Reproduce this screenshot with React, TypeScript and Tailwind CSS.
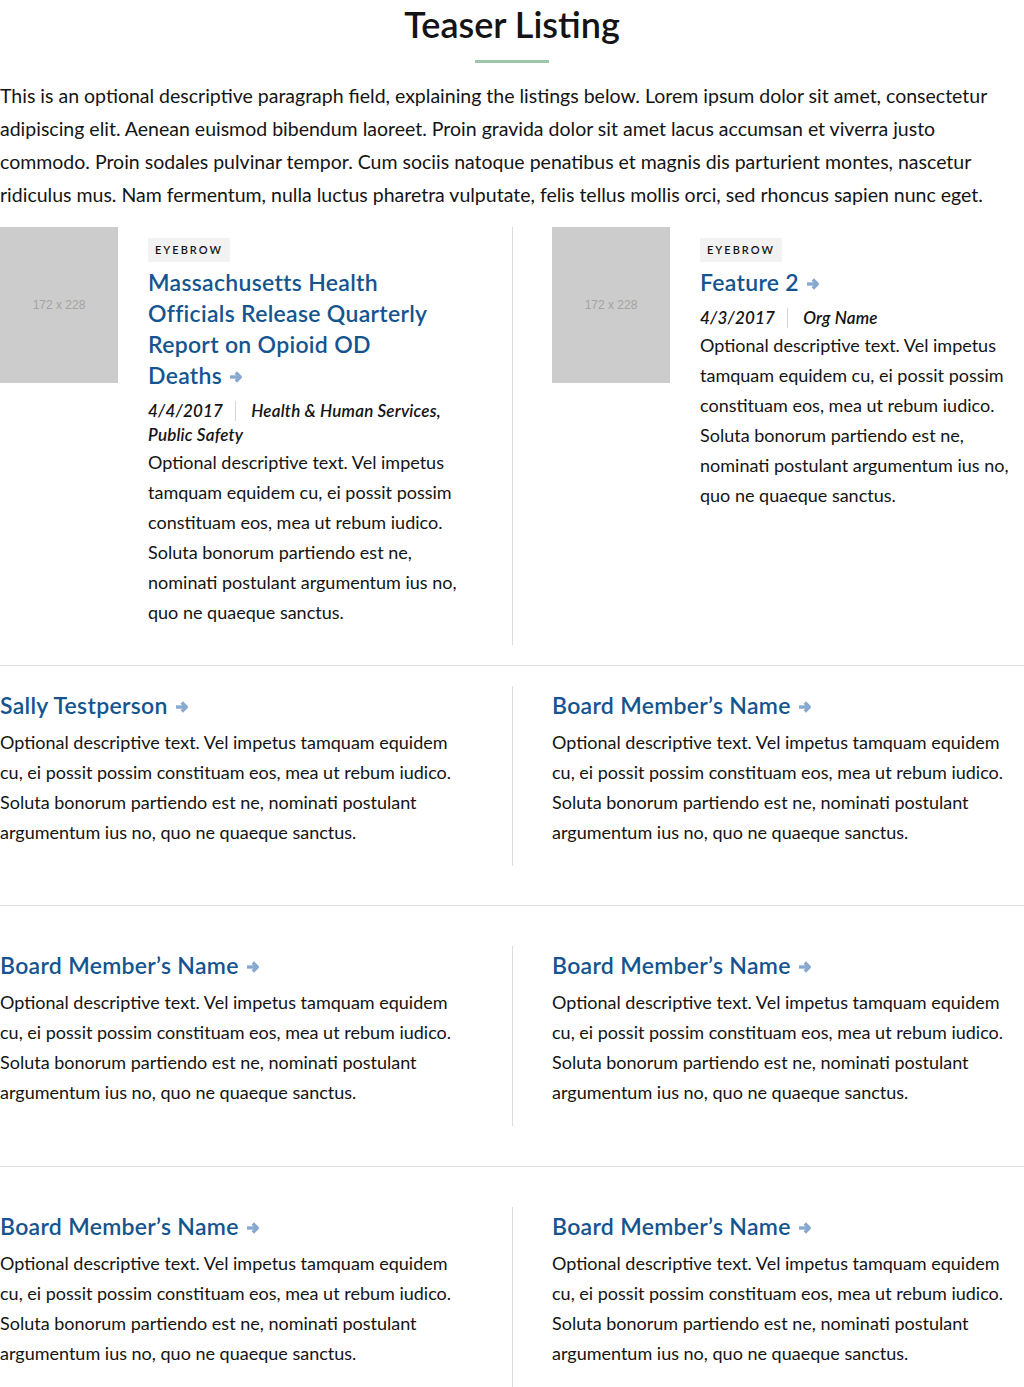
import React from 'react'

const Arrow = () => (
  <svg viewBox="0 0 13 12" className="inline-block w-[13px] h-[12px] ml-[8px] align-[1px]" fill="none">
    <path d="M0 6h10" stroke="#88a9cf" strokeWidth="3.4" />
    <path d="M5.8 1.5 10.3 6l-4.5 4.5" stroke="#88a9cf" strokeWidth="3.4" strokeLinejoin="round" />
  </svg>
)

const Title = ({ children, narrow }: { children: React.ReactNode; narrow?: boolean }) => (
  <h2
    className={`text-[23px] leading-[31px] font-semibold tracking-[0.3px] text-[#14558f] ${narrow ? 'max-w-[292px]' : ''}`}
  >
    {children}
    <Arrow />
  </h2>
)

const body =
  'Optional descriptive text. Vel impetus tamquam equidem cu, ei possit possim constituam eos, mea ut rebum iudico. Soluta bonorum partiendo est ne, nominati postulant argumentum ius no, quo ne quaeque sanctus.'

const ImageTeaser = ({ title, date, org }: { title: string; date: string; org: string }) => (
  <div className="flex gap-[30px]">
    <div className="w-[118px] h-[156px] shrink-0 bg-[#cccccc] flex items-center justify-center text-[12px] text-[#a3a3a3] font-['Liberation_Sans',sans-serif]">
      172 x 228
    </div>
    <div className="pt-[9px] min-w-0">
      <span className="inline-block bg-[#f2f2f2] px-[7px] h-[24px] leading-[24px] text-[11px] tracking-[2px] uppercase text-[#141414] font-semibold">
        Eyebrow
      </span>
      <div className="mt-[5px]">
        <Title narrow>{title}</Title>
      </div>
      <div className="mt-[8px] text-[17px] leading-[24px] italic font-semibold tracking-[0.2px] text-[#141414]">
        <span>{date}</span>
        <span className="inline-block w-px h-[20px] bg-[#d6d6d6] align-[-4px] ml-[12px] mr-[15px]" />
        <span>{org}</span>
      </div>
      <p className="text-[18px] leading-[30px] text-[#141414]">{body}</p>
    </div>
  </div>
)

const Person = ({ name }: { name: string }) => (
  <div className="pt-[4px] pb-[19px]">
    <Title>{name}</Title>
    <p className="mt-[6px] text-[18px] leading-[30px] text-[#141414]">{body}</p>
  </div>
)

const PersonRow = ({ left, right, className }: { left: string; right: string; className: string }) => (
  <div className={`grid grid-cols-2 ${className}`}>
    <div className="pr-[40px]">
      <Person name={left} />
    </div>
    <div className="pl-[39px] border-l border-[#dcdcdc]">
      <Person name={right} />
    </div>
  </div>
)

export default function App() {
  return (
    <div className="w-[1024px] bg-white font-['Lato',sans-serif] text-[#141414]">
      {/* Header */}
      <h1 className="text-center text-[36px] leading-[48px] font-semibold text-[#141414]">Teaser Listing</h1>
      <div className="mx-auto mt-[12px] w-[74px] h-[3px] bg-[#9bc6ab]" />
      <p className="mt-[16px] text-[19.5px] leading-[33px] text-[#141414]">
        This is an optional descriptive paragraph field, explaining the listings below. Lorem ipsum dolor sit amet,
        consectetur adipiscing elit. Aenean euismod bibendum laoreet. Proin gravida dolor sit amet lacus accumsan et
        viverra justo commodo. Proin sodales pulvinar tempor. Cum sociis natoque penatibus et magnis dis parturient
        montes, nascetur ridiculus mus. Nam fermentum, nulla luctus pharetra vulputate, felis tellus mollis orci, sed
        rhoncus sapien nunc eget.
      </p>

      {/* Image teasers */}
      <div className="grid grid-cols-2 mt-[16px] mb-[20px]">
        <div className="pr-[40px] pb-[18px]">
          <ImageTeaser
            title="Massachusetts Health Officials Release Quarterly Report on Opioid OD Deaths"
            date="4/4/2017"
            org="Health & Human Services, Public Safety"
          />
        </div>
        <div className="pl-[39px] border-l border-[#dcdcdc]">
          <ImageTeaser title="Feature 2" date="4/3/2017" org="Org Name" />
        </div>
      </div>
      <div className="h-px bg-[#dcdcdc]" />

      <PersonRow left="Sally Testperson" right="Board Member’s Name" className="mt-[20px] mb-[39px]" />
      <div className="h-px bg-[#dcdcdc]" />

      <PersonRow left="Board Member’s Name" right="Board Member’s Name" className="mt-[40px] mb-[40px]" />
      <div className="h-px bg-[#dcdcdc]" />

      <PersonRow left="Board Member’s Name" right="Board Member’s Name" className="mt-[40px]" />
    </div>
  )
}
